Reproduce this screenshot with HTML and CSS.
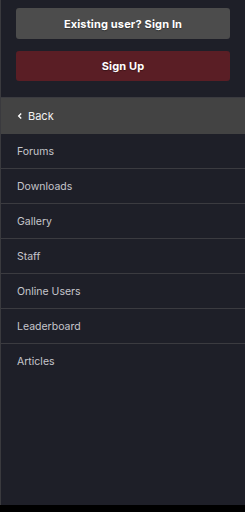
FILE: index.html
```html
<!DOCTYPE html>
<html lang="en">
<head>
    <meta charset="UTF-8" />
    <meta name="viewport" content="width=device-width, initial-scale=1" />
    <title>Menu</title>
    <link rel="stylesheet" href="styles.css">
</head>
<body>

<div class="panel">
    <div class="account">
        <a class="btn btn-signin" href="#">Existing user? Sign In</a>
        <a class="btn btn-signup" href="#">Sign Up</a>
    </div>

    <ul class="menu">
        <li class="menu-back">
            <svg width="6" height="8" viewBox="0 0 6 8" aria-hidden="true"><path d="M4.2 1.5 L1.7 4 L4.2 6.5" fill="none" stroke="#fff" stroke-width="1.4"/></svg>
            <span>Back</span>
        </li>
        <li>Forums</li>
        <li>Downloads</li>
        <li>Gallery</li>
        <li>Staff</li>
        <li>Online Users</li>
        <li>Leaderboard</li>
        <li>Articles</li>
    </ul>
</div>

</body>
</html>
```

FILE: styles.css
```css
* { box-sizing: border-box; }
body {
  margin: 0;
  background: #000;
  font-family: Inter, 'Noto Sans', sans-serif;
}

.panel {
  height: 505px;
  background: #1e1f28;
  border-left: 1px solid #3a3a3e;
}

.account {
  display: flex;
  flex-direction: column;
  gap: 12px;
  padding: 8px 15px 16px 15px;
}
.btn {
  display: flex;
  align-items: center;
  justify-content: center;
  height: 31px;
  border-radius: 3px;
  color: #fff;
  font-size: 11px;
  font-weight: 700;
  text-decoration: none;
  text-shadow: 0 1px 1px rgba(0,0,0,0.35);
  letter-spacing: 0.15px;
}
.btn-signin { background: #4c4c4c; }
.btn-signup { background: #5a1e25; height: 30px; }

.menu {
  list-style: none;
  margin: 0;
  padding: 0;
  border-top: 1px solid #3b3b40;
}
.menu li {
  display: flex;
  align-items: center;
  height: 35px;
  padding-left: 16px;
  font-size: 10.5px;
  color: #c6c6cc;
  border-bottom: 1px solid #3b3b40;
}
.menu li:last-child { border-bottom: none; }
.menu li.menu-back {
  background: #434343;
  color: #f2f2f2;
  font-size: 11px;
  gap: 5px;
  border-bottom: none;
  height: 36px;
}
```
